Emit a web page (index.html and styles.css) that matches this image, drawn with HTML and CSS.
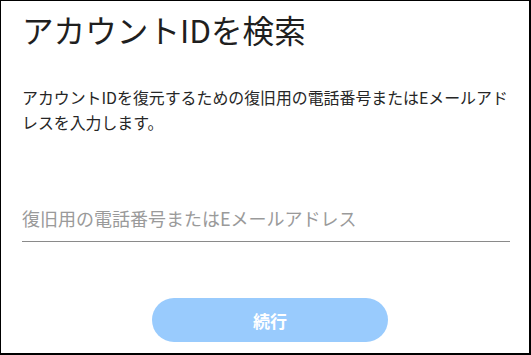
FILE: index.html
```html
<!DOCTYPE html>
<html lang="ja">
<head>
<meta charset="utf-8">
<link rel="stylesheet" href="styles.css">
</head>
<body>
<div class="frame">
  <h1 class="title">アカウントIDを検索</h1>
  <p class="desc">アカウントIDを復元するための復旧用の電話番号またはEメールアドレスを入力します。</p>
  <div class="field">
    <input class="input" type="text" placeholder="復旧用の電話番号またはEメールアドレス">
  </div>
  <div class="actions">
    <button class="btn" type="button">続行</button>
  </div>
</div>
</body>
</html>
```

FILE: styles.css
```css
html, body {
  margin: 0;
  padding: 0;
  background: #fff;
}
.frame {
  box-sizing: border-box;
  width: 531px;
  height: 355px;
  border-style: solid;
  border-color: #000;
  border-width: 1px 2px 2px 1px;
  padding: 0 19px 0 21px;
  font-family: "Noto Sans CJK JP", "Noto Sans", sans-serif;
  color: #222;
  display: flex;
  flex-direction: column;
}
.title {
  margin: 8px 0 0 0;
  font-size: 31.6px;
  line-height: 40px;
  font-weight: 400;
  color: #1f1f1f;
}
.desc {
  margin: 36px 0 0 0;
  font-size: 15.9px;
  line-height: 25px;
  color: #262626;
}
.field {
  margin-top: 60px;
  border-bottom: 1px solid #8a8a8a;
}
.input {
  box-sizing: border-box;
  width: 100%;
  border: none;
  outline: none;
  padding: 0;
  margin: 0;
  height: 46px;
  font-family: inherit;
  font-size: 18px;
  background: transparent;
  color: #222;
}
.input::placeholder {
  color: #9a9a9a;
}
.actions {
  display: flex;
  justify-content: center;
  margin-top: 56px;
  padding-left: 8px;
}
.btn {
  width: 236px;
  height: 44px;
  border: none;
  border-radius: 22px;
  background: #99cbfd;
  color: #fff;
  font-family: inherit;
  font-weight: 700;
  font-size: 17px;
  padding: 0;
}
```
